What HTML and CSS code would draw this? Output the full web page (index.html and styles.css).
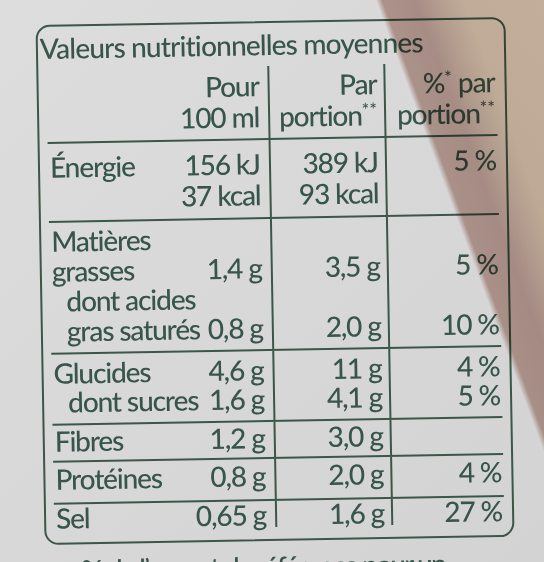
FILE: index.html
```html
<!DOCTYPE html>
<html lang="fr">
<head>
<meta charset="utf-8">
<title>Valeurs nutritionnelles moyennes</title>
<link rel="stylesheet" href="styles.css">
</head>
<body>
<div class="sheet">
  <div class="label">
    <div class="title">Valeurs nutritionnelles moyennes</div>

    <div class="row r-head">
      <div class="c1"><div class="ln"><span></span><span>Pour</span></div><div class="ln"><span></span><span>100 ml</span></div></div>
      <div class="c2"><div class="ln">Par</div><div class="ln">portion<sup>**</sup></div></div>
      <div class="c3"><div class="ln">%<sup>*</sup> par</div><div class="ln">portion<sup>**</sup></div></div>
    </div>

    <div class="row r-energy">
      <div class="c1"><div class="ln"><span>Énergie</span><span>156 kJ</span></div><div class="ln"><span></span><span>37 kcal</span></div></div>
      <div class="c2"><div class="ln">389 kJ</div><div class="ln">93 kcal</div></div>
      <div class="c3"><div class="ln">5 %</div><div class="ln"></div></div>
    </div>

    <div class="row r-fat">
      <div class="c1">
        <div class="ln"><span>Matières</span><span></span></div>
        <div class="ln"><span>grasses</span><span>1,4 g</span></div>
        <div class="ln sub"><span>dont acides</span><span></span></div>
        <div class="ln sub"><span>gras saturés</span><span>0,8 g</span></div>
      </div>
      <div class="c2"><div class="ln"></div><div class="ln">3,5 g</div><div class="ln"></div><div class="ln">2,0 g</div></div>
      <div class="c3"><div class="ln"></div><div class="ln">5 %</div><div class="ln"></div><div class="ln">10 %</div></div>
    </div>

    <div class="row r-gluc">
      <div class="c1">
        <div class="ln"><span>Glucides</span><span>4,6 g</span></div>
        <div class="ln sub"><span>dont sucres</span><span>1,6 g</span></div>
      </div>
      <div class="c2"><div class="ln">11 g</div><div class="ln">4,1 g</div></div>
      <div class="c3"><div class="ln">4 %</div><div class="ln">5 %</div></div>
    </div>

    <div class="row r-fib">
      <div class="c1"><div class="ln"><span>Fibres</span><span>1,2 g</span></div></div>
      <div class="c2"><div class="ln">3,0 g</div></div>
      <div class="c3"><div class="ln"></div></div>
    </div>

    <div class="row r-prot">
      <div class="c1"><div class="ln"><span>Protéines</span><span>0,8 g</span></div></div>
      <div class="c2"><div class="ln">2,0 g</div></div>
      <div class="c3"><div class="ln">4 %</div></div>
    </div>

    <div class="row r-sel">
      <div class="c1"><div class="ln"><span>Sel</span><span>0,65 g</span></div></div>
      <div class="c2"><div class="ln">1,6 g</div></div>
      <div class="c3"><div class="ln">27 %</div></div>
    </div>
  </div>
  <p class="foot">% de l’apport de référence pour un</p>
</div>
</body>
</html>
```
FILE: styles.css
```css
html, body { margin: 0; padding: 0; }
html { background: #d7d7d7; }
body {
  width: 544px; height: 562px; overflow: hidden; position: relative;
  font-family: Lato, "Open Sans", sans-serif; font-size: 28px; font-weight: 500; color: #37554a;
  background: linear-gradient(135deg, #dddddd 0%, #d7d7d7 60%, #d3d3d3 100%);
}
/* brown reflection of the photo, laid over the label */
body::after {
  content: ""; position: absolute; left: 0; top: 0; width: 544px; height: 562px;
  pointer-events: none; mix-blend-mode: multiply;
  background: linear-gradient(69.6deg,
    #ffffff 0, #ffffff 548px,
    #c9aba2 554px, #c4a59c 585px, #d3b8a8 605px, #e3cab4 630px, #e6cdb7 100%);
}
.sheet {
  position: relative; padding-top: 21px;
  transform: rotate(-1deg); transform-origin: 272px 280px;
}
.label {
  margin-left: 40px; width: 470px; box-sizing: border-box;
  border: 2px solid #3a5748; border-radius: 14px; padding: 0 8px 12px;
}
.title { margin-left: -6px; padding-top: 4px; line-height: 34px; white-space: nowrap; letter-spacing: -0.8px; }

.row {
  --lh: 31px; --pt: 0px; --pb: 6px;
  display: grid; grid-template-columns: 221px 116px 1fr;
  border-bottom: 2px solid #3a5748; line-height: var(--lh);
  letter-spacing: -1.1px; white-space: nowrap;
}
.row > div { padding-top: var(--pt); padding-bottom: var(--pb); }
.ln { height: var(--lh); }
.c1 { padding-left: 2px; padding-right: 9px; }
.c1 .ln { display: flex; justify-content: space-between; }
.c1 .sub { padding-left: 14px; }
.c2, .c3 { border-left: 2px solid #3a5748; text-align: right; }
.c2 { padding-right: 7px; }
.c3 { padding-right: 2px; }

.r-head { --pt: 4px; --pb: 6px; margin-top: 5px; }
.r-energy { --pt: 8px; --pb: 7px; }
.r-fat { --lh: 30px; --pt: 3px; --pb: 7px; }
.r-gluc { --lh: 29px; --pt: 4px; --pb: 7px; }
.r-fib { --pt: 0px; --pb: 4px; }
.r-prot { --pt: 1px; --pb: 8px; }
.r-sel { --lh: 26px; --pt: 0px; --pb: 0px; border-bottom: 0; }

sup { font-size: 18px; line-height: 0; vertical-align: 9px; letter-spacing: 0; }

.foot { margin: 10px 0 0 76px; line-height: 31px; white-space: nowrap; letter-spacing: -1.8px; }
```
